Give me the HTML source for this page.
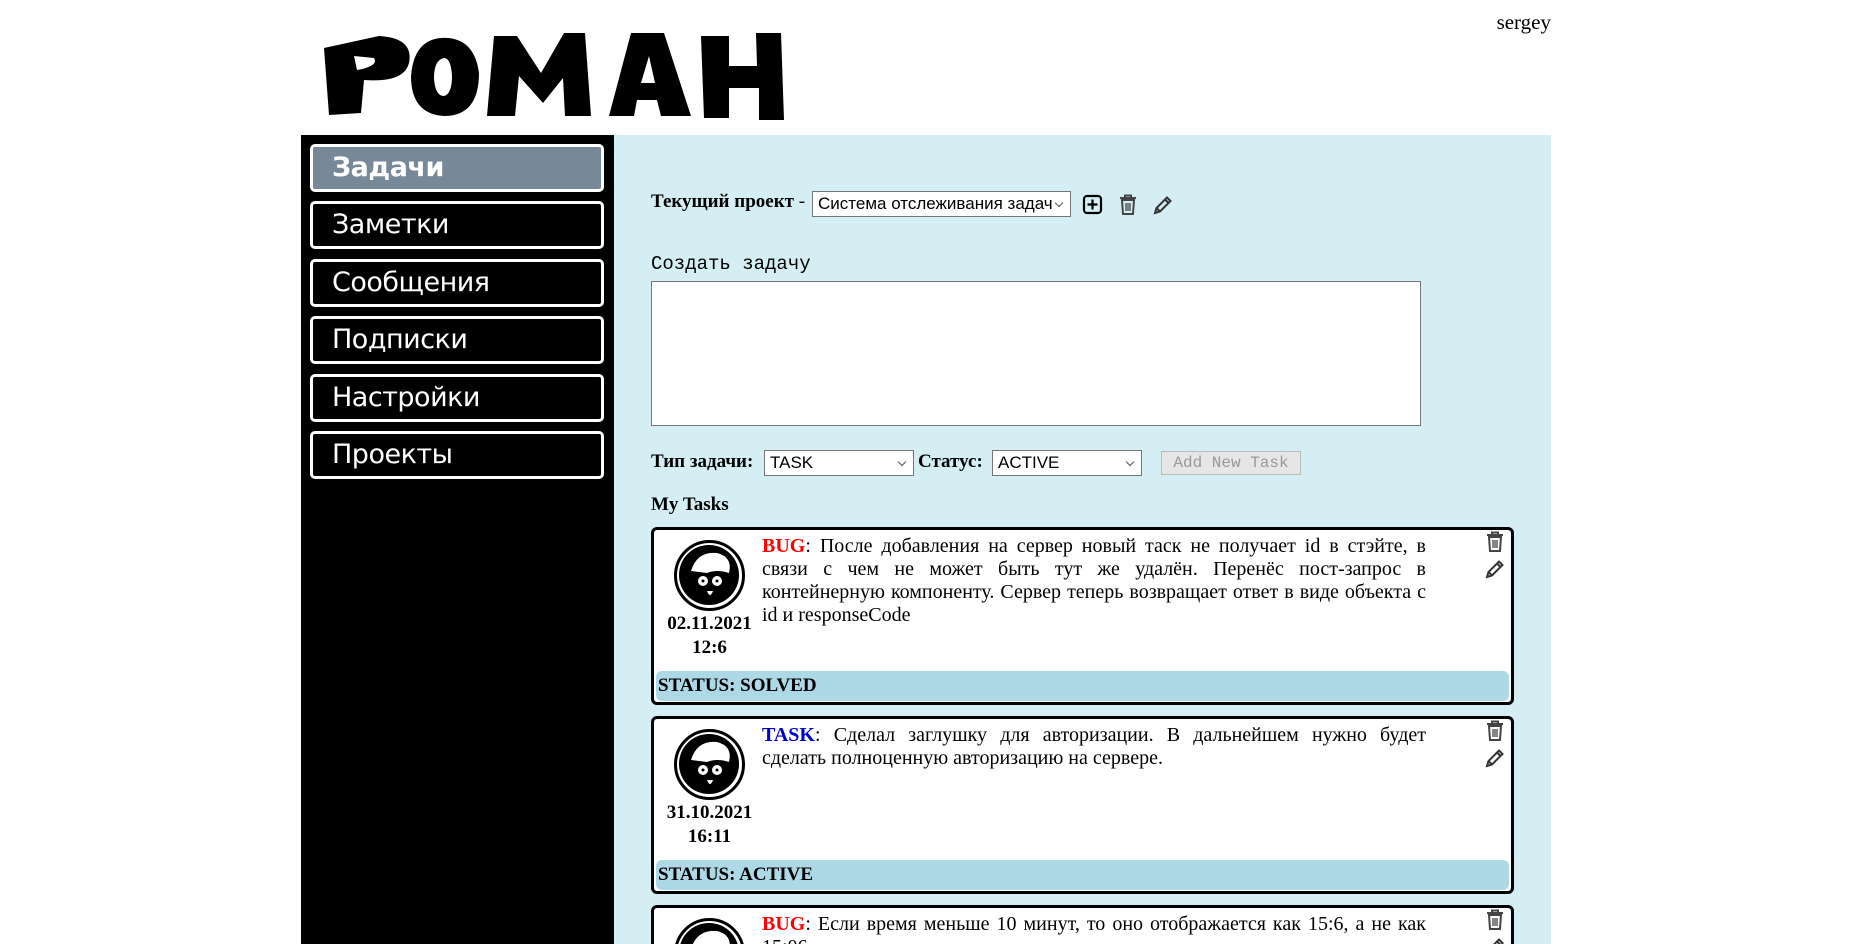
<!DOCTYPE html>
<html><head><meta charset="utf-8"><style>
*{box-sizing:border-box;margin:0;padding:0}
html,body{width:1852px;height:944px;overflow:hidden}
body{background:#fff;position:relative;font-family:"Liberation Serif","DejaVu Serif",serif;color:#000}
#wrap{position:absolute;left:0;top:0;width:1852px;height:944px;overflow:hidden}
.abs{position:absolute}
#side{left:301px;top:135px;width:313px;height:809px;background:#000}
#main{left:614px;top:135px;width:937px;height:809px;background:#d4eef3}
.nav{position:absolute;left:310px;width:294px;height:48px;border:3px solid #fff;border-radius:5px;background:#000;color:#fff;font-family:"DejaVu Sans","Liberation Sans",sans-serif;font-size:27px;line-height:42px;padding-left:19px;letter-spacing:-0.5px}
.nav.act{background:#778899;font-weight:bold}
.lbl{font-size:19px;font-weight:bold}
.sel{position:absolute;background:#fff;border:1px solid #767676;font-family:"Liberation Sans",sans-serif;font-size:17px;line-height:24px;padding-left:5px;height:26px}
.sel:after{content:"";position:absolute;right:8px;top:8px;width:5px;height:5px;border-right:1.3px solid #555;border-bottom:1.3px solid #555;transform:rotate(45deg)}
.card{position:absolute;left:651px;width:863px;height:178px;background:#fff;border:3px solid #000;border-radius:6px}
.av{position:absolute;left:20px;top:10px;width:71px;height:71px;border-radius:50%;border:3px solid #000;background:#fff;overflow:hidden}
.dt{position:absolute;left:0;top:82px;width:111px;text-align:center;font-weight:bold;font-size:19px;line-height:24px}
.txt{position:absolute;left:108px;top:5px;width:664px;text-align:justify;font-size:20px;line-height:23px}
.st{position:absolute;left:2px;right:2px;top:141px;height:30px;background:#add8e6;border-radius:6px;font-weight:bold;font-size:19px;line-height:30px;padding-left:2px}
.ic{position:absolute;right:5px}
</style></head><body><div id="wrap">
<svg class="abs" style="left:319px;top:28px" width="495" height="92" viewBox="0 0 495 92">
<g fill="#000">
<path d="M5 20 L60 8 Q95 10 90 35 Q85 55 45 52 L42 85 L10 87 Z M35 28 L38 42 Q60 38 55 30 Z" fill-rule="evenodd"/>
<path d="M122 10 Q155 8 160 45 Q160 88 125 88 Q92 86 92 48 Q95 12 122 10 Z M125 30 Q115 32 115 50 Q116 68 125 68 Q133 66 133 48 Q132 30 125 30 Z" fill-rule="evenodd"/>
<path d="M168 88 L175 8 L198 8 L222 45 L245 5 L266 5 L272 88 L246 88 L244 50 L224 75 L200 48 L196 88 Z"/>
<path d="M290 88 L312 5 L345 5 L372 88 L342 88 L338 72 L318 72 L315 88 Z M322 55 L336 55 L330 28 Z" fill-rule="evenodd"/>
<path d="M382 8 L410 8 L410 38 L438 38 L437 5 L462 5 L465 92 L440 92 L440 60 L410 60 L410 90 L385 90 Z"/>
</g></svg>
<div class="abs" style="right:301px;top:10px;font-size:21px">sergey</div>
<div id="side" class="abs"></div>
<div id="main" class="abs"></div>
<div class="nav act" style="top:144px">Задачи</div>
<div class="nav" style="top:201px">Заметки</div>
<div class="nav" style="top:259px">Сообщения</div>
<div class="nav" style="top:316px">Подписки</div>
<div class="nav" style="top:374px">Настройки</div>
<div class="nav" style="top:431px">Проекты</div>

<div class="abs lbl" style="left:651px;top:191px">Текущий проект <span style="font-weight:normal">-</span></div>
<div class="sel" style="left:812px;top:191px;width:259px">Система отслеживания задач</div>
<svg class="abs" style="left:1082px;top:194px" width="22" height="22" viewBox="0 0 22 22"><rect x="2" y="2" width="17" height="17" rx="3" fill="none" stroke="#000" stroke-width="2.2"/><path d="M10.5 5.5v10M5.5 10.5h10" stroke="#000" stroke-width="2.2"/></svg>
<svg class="abs" style="left:1117px;top:193px" width="22" height="24" viewBox="0 0 22 24"><path d="M3 5h16M8 5V2.5h6V5M5 7l1 14h10l1-14Z" fill="none" stroke="#444" stroke-width="2"/><path d="M9 10v8M11 10v8M13 10v8" stroke="#444" stroke-width="1.3"/></svg>
<svg class="abs" style="left:1152px;top:194px" width="22" height="22" viewBox="0 0 22 22"><path d="M3 19l1.5-5L15 3.5l3.5 3.5L8 17.5Z M4.5 14l3.5 3.5 M13 5.5l3.5 3.5" fill="none" stroke="#333" stroke-width="2"/></svg>

<div class="abs" style="left:651px;top:253px;font-family:'Liberation Mono','DejaVu Sans Mono',monospace;font-size:19px">Создать задачу</div>
<div class="abs" style="left:651px;top:281px;width:770px;height:145px;background:#fff;border:1px solid #767676"></div>

<div class="abs lbl" style="left:651px;top:451px">Тип задачи:</div>
<div class="sel" style="left:764px;top:450px;width:150px">TASK</div>
<div class="abs lbl" style="left:918px;top:451px">Статус:</div>
<div class="sel" style="left:992px;top:450px;width:150px">ACTIVE</div>
<div class="abs" style="left:1161px;top:451px;width:140px;height:24px;background:#e6e6e6;border:1px solid #bbb;color:#999;font-family:'Liberation Mono',monospace;font-size:16px;line-height:22px;text-align:center">Add New Task</div>
<div class="abs lbl" style="left:651px;top:494px">My Tasks</div>

<div class="card" style="top:527px">
<div class="av"><svg width="65" height="65" viewBox="0 0 65 65"><circle cx="32" cy="32" r="30" fill="#000"/><path d="M14 28 Q20 8 40 10 Q56 14 52 30 Q40 26 30 30 Z" fill="#fff"/><circle cx="26" cy="38" r="5" fill="#fff"/><circle cx="40" cy="38" r="5" fill="#fff"/><circle cx="26" cy="38" r="1.5"/><circle cx="40" cy="38" r="1.5"/><path d="M30 48 Q33 56 36 48Z" fill="#fff"/></svg></div>
<div class="dt">02.11.2021<br>12:6</div>
<div class="txt"><b style="color:red">BUG</b>: После добавления на сервер новый таск не получает id в стэйте, в связи с чем не может быть тут же удалён. Перенёс пост-запрос в контейнерную компоненту. Сервер теперь возвращает ответ в виде объекта с id и responseCode</div>
<svg class="ic" style="top:0" width="22" height="24" viewBox="0 0 22 24"><path d="M3 5h16M8 5V2.5h6V5M5 7l1 14h10l1-14Z" fill="none" stroke="#444" stroke-width="2"/><path d="M9 10v8M11 10v8M13 10v8" stroke="#444" stroke-width="1.3"/></svg>
<svg class="ic" style="top:28px" width="22" height="22" viewBox="0 0 22 22"><path d="M3 19l1.5-5L15 3.5l3.5 3.5L8 17.5Z M4.5 14l3.5 3.5 M13 5.5l3.5 3.5" fill="none" stroke="#333" stroke-width="2"/></svg>
<div class="st">STATUS: SOLVED</div>
</div>

<div class="card" style="top:716px">
<div class="av"><svg width="65" height="65" viewBox="0 0 65 65"><circle cx="32" cy="32" r="30" fill="#000"/><path d="M14 28 Q20 8 40 10 Q56 14 52 30 Q40 26 30 30 Z" fill="#fff"/><circle cx="26" cy="38" r="5" fill="#fff"/><circle cx="40" cy="38" r="5" fill="#fff"/><circle cx="26" cy="38" r="1.5"/><circle cx="40" cy="38" r="1.5"/><path d="M30 48 Q33 56 36 48Z" fill="#fff"/></svg></div>
<div class="dt">31.10.2021<br>16:11</div>
<div class="txt"><b style="color:#0000cc">TASK</b>: Сделал заглушку для авторизации. В дальнейшем нужно будет сделать полноценную авторизацию на сервере.</div>
<svg class="ic" style="top:0" width="22" height="24" viewBox="0 0 22 24"><path d="M3 5h16M8 5V2.5h6V5M5 7l1 14h10l1-14Z" fill="none" stroke="#444" stroke-width="2"/><path d="M9 10v8M11 10v8M13 10v8" stroke="#444" stroke-width="1.3"/></svg>
<svg class="ic" style="top:28px" width="22" height="22" viewBox="0 0 22 22"><path d="M3 19l1.5-5L15 3.5l3.5 3.5L8 17.5Z M4.5 14l3.5 3.5 M13 5.5l3.5 3.5" fill="none" stroke="#333" stroke-width="2"/></svg>
<div class="st">STATUS: ACTIVE</div>
</div>

<div class="card" style="top:905px">
<div class="av"><svg width="65" height="65" viewBox="0 0 65 65"><circle cx="32" cy="32" r="30" fill="#000"/><path d="M14 28 Q20 8 40 10 Q56 14 52 30 Q40 26 30 30 Z" fill="#fff"/></svg></div>
<div class="txt"><b style="color:red">BUG</b>: Если время меньше 10 минут, то оно отображается как 15:6, а не как 15:06</div>
<svg class="ic" style="top:0" width="22" height="24" viewBox="0 0 22 24"><path d="M3 5h16M8 5V2.5h6V5M5 7l1 14h10l1-14Z" fill="none" stroke="#444" stroke-width="2"/><path d="M9 10v8M11 10v8M13 10v8" stroke="#444" stroke-width="1.3"/></svg>
<svg class="ic" style="top:28px" width="22" height="22" viewBox="0 0 22 22"><path d="M3 19l1.5-5L15 3.5l3.5 3.5L8 17.5Z M4.5 14l3.5 3.5 M13 5.5l3.5 3.5" fill="none" stroke="#333" stroke-width="2"/></svg>
</div>
</div></body></html>
